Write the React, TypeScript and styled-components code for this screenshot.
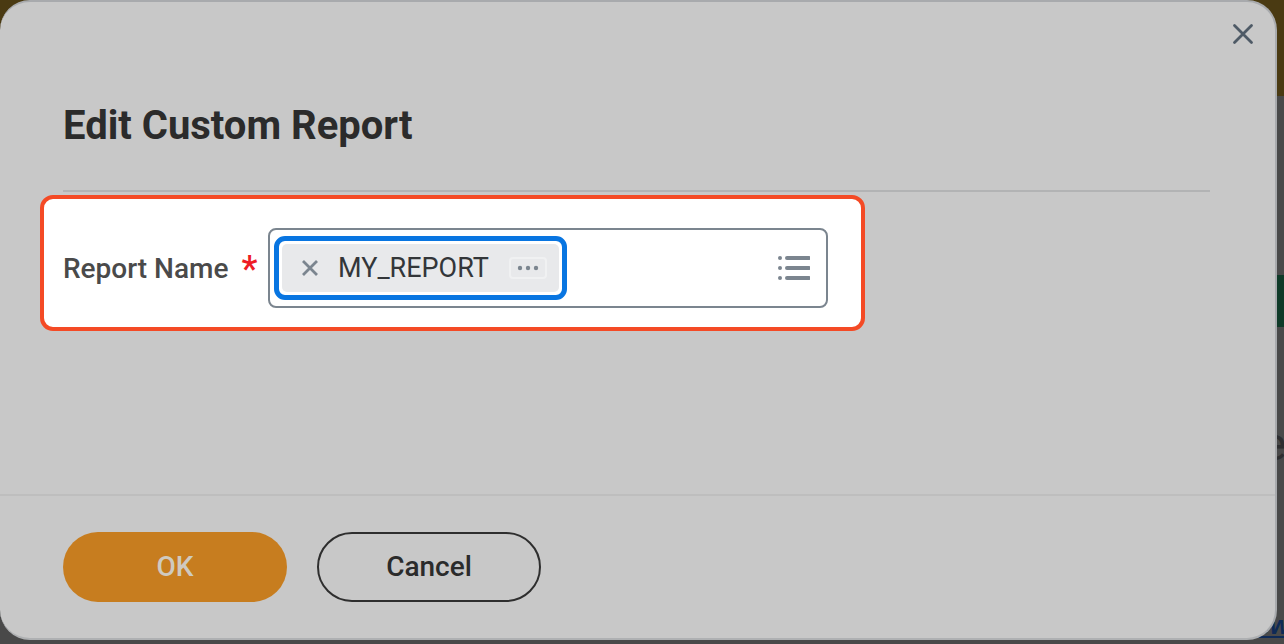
import React from "react";
import styled, { createGlobalStyle } from "styled-components";

const Global = createGlobalStyle`
  html, body { margin: 0; padding: 0; width: 1284px; height: 644px; overflow: hidden; background: #494949; }
  * { box-sizing: border-box; }
  body { font-family: Roboto, "Liberation Sans", sans-serif; }
`;

const Page = styled.div`
  position: relative;
  width: 1284px;
  height: 644px;
  overflow: hidden;
  background: #494949;
`;

const Backdrop = styled.div`
  display: flex;
  flex-direction: column;
  height: 644px;
`;

const BrandBar = styled.div`
  height: 96px;
  background: #4a3a12;
`;

const GreenBand = styled.div`
  height: 52px;
  margin-top: 179px;
  background: #0f3a28;
`;

const GhostLetter = styled.div`
  margin-top: 82px;
  height: 70px;
  padding-left: 1262px;
  font-size: 46px;
  line-height: 70px;
  color: #2e2e30;
`;

const GhostLink = styled.div`
  margin-top: 128px;
  padding-left: 1256px;
  height: 36px;
  flex: none;
  white-space: nowrap;
  font: italic 700 25px/36px "Liberation Sans", sans-serif;
  color: #0e2a57;
  text-decoration: underline;
`;

const Dialog = styled.div`
  position: absolute;
  left: 0;
  top: 0;
  width: 1277px;
  height: 640px;
  display: flex;
  flex-direction: column;
  background: #c8c8c8;
  border-radius: 30px;
  border-top: 2px solid #a8aaad;
  border-right: 2px solid #a8aaad;
  border-bottom: 2px solid #aeb0b2;
  overflow: hidden;
`;

const CloseButton = styled.button`
  position: absolute;
  top: 20px;
  right: 20px;
  width: 24px;
  height: 24px;
  padding: 0;
  border: 0;
  background: none;
  display: flex;
`;

const Body = styled.div`
  flex: 1;
  padding: 0 65px 0 63px;
`;

const Title = styled.h1`
  margin: 0;
  padding-top: 100px;
  height: 190px;
  border-bottom: 2px solid #b2b3b4;
  font-size: 40px;
  line-height: 48px;
  font-weight: 700;
  color: #2b2b2b;
`;

const Highlight = styled.div`
  display: flex;
  align-items: center;
  width: 825px;
  height: 136px;
  margin: 3px 0 0 -23px;
  padding: 10px 0 0 19px;
  background: #fff;
  border: 4px solid #f44a25;
  border-radius: 13px;
`;

const Label = styled.label`
  width: 205px;
  padding-top: 2px;
  display: flex;
  gap: 13px;
  font-size: 28px;
  line-height: 34px;
  font-weight: 500;
  color: #4a4a4a;
`;

const Star = styled.span`
  color: #ee1c25;
  font-size: 36px;
  font-weight: 500;
`;

const Field = styled.div`
  width: 560px;
  height: 80px;
  display: flex;
  align-items: center;
  justify-content: space-between;
  padding: 0 16px 0 4px;
  border: 2px solid #7b858f;
  border-radius: 8px;
`;

const Focus = styled.div`
  width: 293px;
  height: 64px;
  padding: 3px;
  border: 5px solid #0875e1;
  border-radius: 11px;
`;

const Chip = styled.div`
  height: 100%;
  display: flex;
  align-items: center;
  padding: 0 12px 0 19px;
  background: #e8e9eb;
  border-radius: 5px;
`;

const ChipText = styled.span`
  margin-left: 19px;
  flex: 1;
  font-size: 27px;
  line-height: 34px;
  color: #333639;
`;

const MoreBox = styled.span`
  width: 38px;
  height: 22px;
  display: flex;
  align-items: center;
  justify-content: center;
  border: 2px solid #f0f1f2;
  border-radius: 4px;
`;

const Footer = styled.div`
  height: 144px;
  display: flex;
  align-items: flex-start;
  gap: 30px;
  padding: 36px 63px 0;
  border-top: 2px solid #bebebe;
`;

const Button = styled.button<{ $primary?: boolean }>`
  width: 224px;
  height: 70px;
  padding: 0 0 2px;
  border-radius: 35px;
  font-family: inherit;
  font-size: 28px;
  font-weight: 500;
  color: ${(p) => (p.$primary ? "#cfcac0" : "#2b2b2b")};
  background: ${(p) => (p.$primary ? "#c77d1f" : "transparent")};
  border: ${(p) => (p.$primary ? "0" : "2px solid #2e2e2e")};
`;

export default function App() {
  return (
    <Page>
      <Global />
      <Backdrop>
        <BrandBar />
        <GreenBand />
        <GhostLetter>e</GhostLetter>
        <GhostLink>ew</GhostLink>
      </Backdrop>
      <Dialog>
        <CloseButton aria-label="Close">
          <svg width="24" height="24" viewBox="0 0 24 24">
            <path d="M3.5 3.5L20.5 20.5M20.5 3.5L3.5 20.5" stroke="#4e5a66" strokeWidth="2.8" strokeLinecap="round" />
          </svg>
        </CloseButton>
        <Body>
          <Title>Edit Custom Report</Title>
          <Highlight>
            <Label>
              Report Name <Star>*</Star>
            </Label>
            <Field>
              <Focus>
                <Chip>
                  <svg width="18" height="18" viewBox="0 0 18 18">
                    <path d="M2 2L16 16M16 2L2 16" stroke="#7b858f" strokeWidth="2.8" />
                  </svg>
                  <ChipText>MY_REPORT</ChipText>
                  <MoreBox>
                    <svg width="22" height="6" viewBox="0 0 22 6">
                      <circle cx="3" cy="3" r="2.2" fill="#7b858f" />
                      <circle cx="11" cy="3" r="2.2" fill="#7b858f" />
                      <circle cx="19" cy="3" r="2.2" fill="#7b858f" />
                    </svg>
                  </MoreBox>
                </Chip>
              </Focus>
              <svg width="32" height="26" viewBox="0 0 32 26">
                <circle cx="2" cy="3" r="2" fill="#7b858f" />
                <circle cx="2" cy="13" r="2" fill="#7b858f" />
                <circle cx="2" cy="23" r="2" fill="#7b858f" />
                <path d="M9 3H31M9 13H31M9 23H31" stroke="#7b858f" strokeWidth="4" strokeLinecap="round" />
              </svg>
            </Field>
          </Highlight>
        </Body>
        <Footer>
          <Button $primary>OK</Button>
          <Button>Cancel</Button>
        </Footer>
      </Dialog>
    </Page>
  );
}
